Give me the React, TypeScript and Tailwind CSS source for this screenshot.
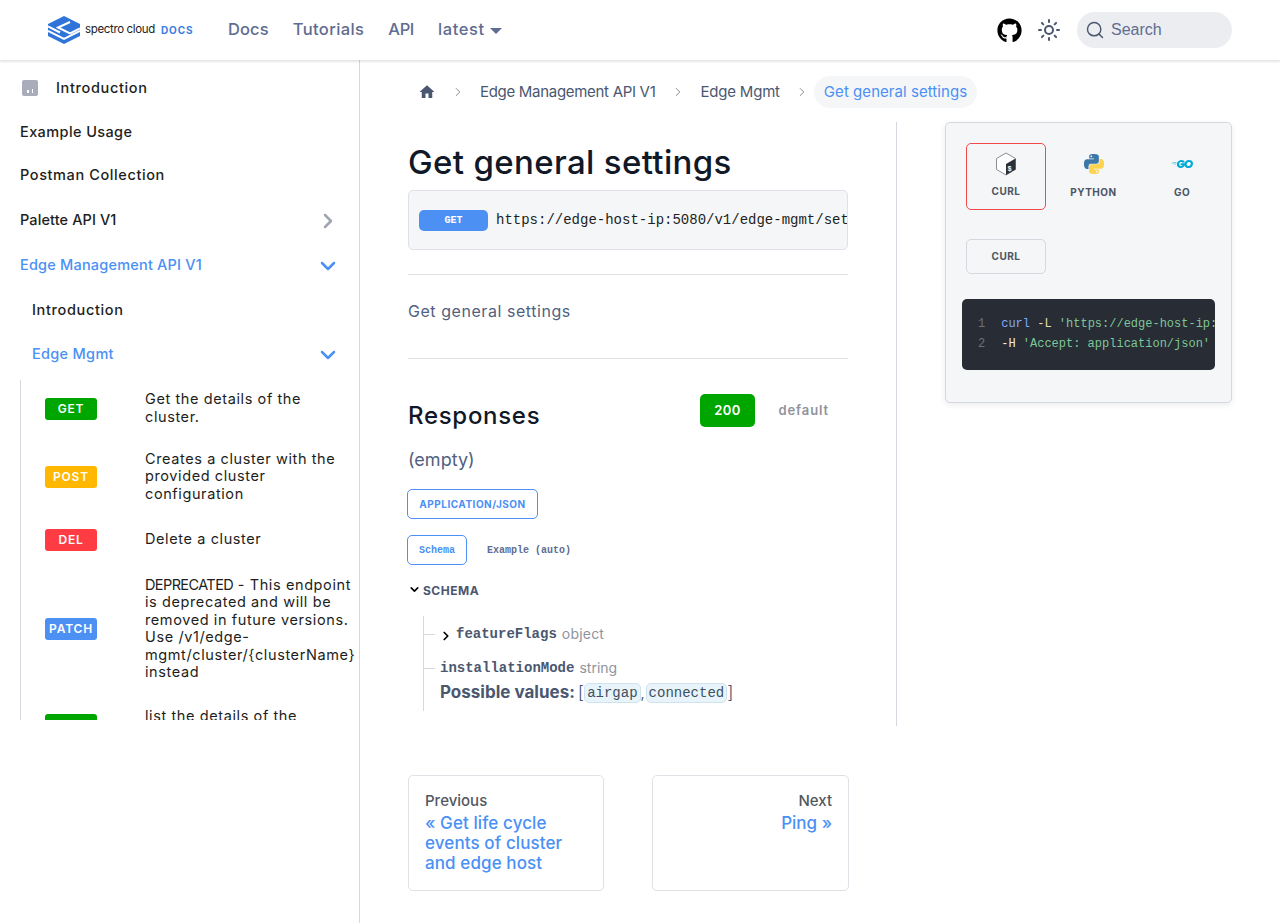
import type { ReactNode } from 'react'
import { ChevronDown, ChevronRight, Search, Sun } from 'lucide-react'
import { FaGithub } from 'react-icons/fa'
import { MdHome } from 'react-icons/md'
import { SiGo } from 'react-icons/si'

const endpoints: { method: string; color: string; lines: ReactNode[]; h: string }[] = [
  { method: 'GET', color: 'bg-[#00a600]', lines: ['Get the details of the', 'cluster.'], h: 'h-[57px]' },
  { method: 'POST', color: 'bg-[#ffb700]', lines: ['Creates a cluster with the', 'provided cluster', 'configuration'], h: 'h-[80px]' },
  { method: 'DEL', color: 'bg-[#ff3b44]', lines: ['Delete a cluster'], h: 'h-[46px]' },
  {
    method: 'PATCH',
    color: 'bg-[#4d90f4]',
    lines: [
      <><span className="tracking-[-0.6px]">DEPRECATED</span> - This endpoint</>,
      'is deprecated and will be',
      'removed in future versions.',
      'Use /v1/edge-',
      'mgmt/cluster/{clusterName}',
      'instead',
    ],
    h: 'h-[132px]',
  },
  { method: 'GET', color: 'bg-[#00a600]', lines: ['list the details of the', 'cluster'], h: 'h-[60px]' },
]

function Logo() {
  return (
    <svg width="32" height="28" viewBox="0 0 32 28" className="shrink-0">
      <path d="M16 0 32 8v12L16 28 0 20V8z" fill="#2f74d9" />
      <path d="M0 15 16 23 32 15" fill="none" stroke="#fff" strokeWidth="2" />
      <path d="M0 10.500 12 16.500M22 6 10 11.500 22 17.500 32 12.500" fill="none" stroke="#fff" strokeWidth="2" />
    </svg>
  )
}

function BashIcon() {
  return (
    <svg width="22" height="24" viewBox="0 0 22 24">
      <path d="M11 1 20.500 6.500v11L11 23 1.500 17.500v-11z" fill="#fff" stroke="#8a8f98" strokeWidth="1" />
      <path d="M20.500 6.500v11L11 23V12z" fill="#2b3038" />
      <text x="12.500" y="19" fontSize="7" fill="#fff" fontFamily="Liberation Mono, monospace">$_</text>
    </svg>
  )
}

function PythonIcon() {
  return (
    <svg width="20" height="22" viewBox="0 0 24 24">
      <path fill="#3b78a8" d="M14.250.18l.9.2.73.26.59.3.45.32.34.34.25.34.16.33.1.3.04.26.02.2-.01.13V8.500l-.05.63-.13.55-.21.46-.26.38-.3.31-.33.25-.35.19-.35.14-.33.1-.3.07-.26.04-.21.02H8.770l-.69.05-.59.14-.5.22-.41.27-.33.32-.27.35-.2.36-.15.37-.1.35-.07.32-.04.27-.02.21v3.060H3.170l-.21-.03-.28-.07-.32-.12-.35-.18-.36-.26-.36-.36-.35-.46-.32-.59-.28-.73-.21-.88-.14-1.050-.05-1.230.06-1.220.16-1.040.24-.87.32-.71.36-.57.4-.44.42-.33.42-.24.4-.16.36-.1.32-.05.24-.01h.16l.06.01h8.160v-.83H6.180l-.01-2.750-.02-.37.05-.34.11-.31.17-.28.25-.26.31-.23.38-.2.44-.18.51-.15.58-.12.64-.1.71-.06.77-.04.84-.02 1.270.05zm-6.300 1.980l-.23.33-.08.41.08.41.23.34.33.22.41.09.41-.09.33-.22.23-.34.08-.41-.08-.41-.23-.33-.33-.22-.41-.09-.41.09z" />
      <path fill="#fdd34f" d="M21.040 6.110l.28.06.32.12.35.18.36.27.36.35.35.47.32.59.28.73.21.88.14 1.040.05 1.230-.06 1.230-.16 1.040-.24.86-.32.71-.36.57-.4.45-.42.33-.42.24-.4.16-.36.09-.32.05-.24.02-.16-.01h-8.220v.82h5.840l.01 2.760.02.36-.05.34-.11.31-.17.29-.25.25-.31.24-.38.2-.44.17-.51.15-.58.13-.64.09-.71.07-.77.04-.84.01-1.270-.04-1.070-.14-.9-.2-.73-.25-.59-.3-.45-.33-.34-.34-.25-.34-.16-.33-.1-.3-.04-.25-.02-.2.01-.13v-5.340l.05-.64.13-.54.21-.46.26-.38.3-.32.33-.24.35-.2.35-.14.33-.1.3-.06.26-.04.21-.02.13-.01h5.840l.69-.05.59-.14.5-.21.41-.28.33-.32.27-.35.2-.36.15-.36.1-.35.07-.32.04-.28.02-.21V6.070h2.090l.14.01zm-6.470 14.250l-.23.33-.08.41.08.41.23.33.33.23.41.08.41-.08.33-.23.23-.33.08-.41-.08-.41-.23-.33-.33-.23-.41-.08-.41.08z" />
    </svg>
  )
}

function Header() {
  return (
    <header className="relative z-10 flex h-[60px] items-center justify-between bg-white pl-12 pr-12 shadow-[0_2px_2px_rgba(0,0,0,0.1)]">
      <div className="flex items-center">
        <div className="flex w-[180px] items-center">
          <Logo />
          <span className="ml-[5px] text-[11.500px] tracking-[-0.35px] text-[#222]">spectro cloud</span>
          <span className="ml-[6px] text-[10px] font-bold tracking-[0.9px] text-[#3b7de0]">DOCS</span>
        </div>
        <nav className="-mt-px flex items-center text-[16.500px] font-medium text-[#606c91]">
          <span className="tracking-[0.1px]">Docs</span>
          <span className="ml-6 tracking-[0.4px]">Tutorials</span>
          <span className="ml-6 tracking-[-0.4px]">API</span>
          <span className="ml-[24px] flex items-center gap-[5px] tracking-[0.6px]">
            latest
            <span className="mt-[3px] h-0 w-0 border-x-[6px] border-t-[6px] border-x-transparent border-t-[#606c91]" />
          </span>
        </nav>
      </div>
      <div className="flex items-center">
        <FaGithub className="text-[25px] text-black" />
        <Sun className="ml-[15px] h-6 w-6 text-[#4b5770]" strokeWidth={2} />
        <div className="ml-[16px] flex h-9 w-[155px] items-center gap-[6px] rounded-full bg-[#ebedf0] pl-2 font-['Liberation_Sans',sans-serif] text-base text-[#606c91]">
          <Search className="h-5 w-5 text-[#4b5770]" strokeWidth={1.750} />
          Search
        </div>
      </div>
    </header>
  )
}

function Sidebar() {
  return (
    <aside className="w-[360px] shrink-0 border-r border-[#d5d8de] pt-[6px] text-[14.500px] font-medium text-[#1c1e21]">
      <div className="flex h-11 items-center pl-[22px]">
        <span className="flex h-4 w-4 items-end justify-center gap-[3px] rounded-[2px] bg-[#a9adbb] pb-[3px]">
          <span className="h-[3px] w-[1.500px] bg-white" />
          <span className="h-[4px] w-[1.500px] bg-white" />
        </span>
        <span className="ml-[18px] tracking-[0.65px]">Introduction</span>
      </div>
      <div className="flex h-11 items-center pl-5 tracking-[0.4px]">Example Usage</div>
      <div className="flex h-[42px] items-center pl-5 tracking-[0.6px]">Postman Collection</div>
      <div className="flex h-12 items-center justify-between pl-5 pr-[19px] tracking-[0.1px]">
        Palette API V1
        <ChevronRight className="h-6 w-6 translate-y-px text-[#a0a3b1]" strokeWidth={2.500} />
      </div>
      <div className="flex h-[42px] items-center justify-between pl-5 pr-[19px] tracking-[0.2px] text-[#4a90f5]">
        Edge Management API V1
        <ChevronDown className="h-6 w-6 translate-y-px" strokeWidth={2.500} />
      </div>
      <div className="flex h-[48px] items-center pl-8 tracking-[0.65px]">Introduction</div>
      <div className="flex h-[40px] items-center justify-between pl-8 pr-[19px] tracking-[0.3px] text-[#4a90f5]">
        Edge Mgmt
        <ChevronDown className="h-6 w-6 translate-y-px" strokeWidth={2.500} />
      </div>
      <div className="ml-5 mt-[6px] h-[340px] overflow-hidden border-l border-[#d5d8de]">
        {endpoints.map((e, i) => (
          <div key={i} className={`flex shrink-0 items-center ${e.h}`}>
            <span className={`ml-6 flex h-[22px] w-[52px] shrink-0 items-center justify-center rounded-[3px] text-xs font-semibold tracking-[0.8px] text-white ${e.color}`}>
              {e.method}
            </span>
            <span className="ml-12 -translate-y-px whitespace-nowrap text-[14.500px] font-normal leading-[17.500px] tracking-[0.6px]">
              {e.lines.map((l, j) => (
                <span key={j} className="block">{l}</span>
              ))}
            </span>
          </div>
        ))}
      </div>
    </aside>
  )
}

function Breadcrumbs() {
  return (
    <div className="flex h-8 items-center whitespace-nowrap pl-[58px] text-[15px] text-[#4b5770]">
      <MdHome className="text-[18px] text-[#4b5770]" />
      <ChevronRight className="ml-[15px] mr-[15px] h-[14px] w-[14px] text-[#777]" strokeWidth={1.500} />
      <span className="tracking-[-0.3px]">Edge Management API V1</span>
      <ChevronRight className="ml-[16px] mr-[15px] h-[14px] w-[14px] text-[#777]" strokeWidth={1.500} />
      <span className="tracking-[-0.2px]">Edge Mgmt</span>
      <ChevronRight className="ml-[15px] mr-[5px] h-[14px] w-[14px] text-[#777]" strokeWidth={1.500} />
      <span className="flex h-8 items-center rounded-full bg-[#f5f6f8] px-[10px] tracking-[0.05px] text-[#4a90f5]">Get general settings</span>
    </div>
  )
}

function Article() {
  return (
    <article className="w-[537px] shrink-0 border-r border-[#d5d8de] pl-12 pr-12">
      <h1 className="mt-[17px] h-[51px] text-[33px] font-medium leading-[46px] tracking-[0.35px] text-[#111827]">Get general settings</h1>
      <div className="flex h-[60px] items-center overflow-hidden whitespace-nowrap rounded-[5px] border border-[#dfe1e6] bg-[#f5f6f8] pl-[10px]">
        <span className="flex h-[21px] w-[69px] shrink-0 items-center justify-center rounded-[5px] bg-[#4d90f4] font-['Liberation_Mono',monospace] text-[10px] font-bold text-white">GET</span>
        <span className="ml-2 font-['Liberation_Mono',monospace] text-sm text-[#1c1e21]">https://edge-host-ip:5080/v1/edge-mgmt/settings</span>
      </div>
      <hr className="mt-6 border-[#dfe1e6]" />
      <p className="mt-[24px] h-6 text-base tracking-[0.55px] text-[#525f7f]">Get general settings</p>
      <hr className="mt-[35px] border-[#dfe1e6]" />

      <div className="mt-[35px] flex justify-between">
        <h2 className="mt-[6px] text-2xl font-medium leading-8 tracking-[0.7px] text-[#111827]">Responses</h2>
        <div className="flex h-[33px] items-center">
          <span className="flex h-[33px] w-[55px] items-center justify-center rounded-[5px] bg-[#00a600] text-[13px] font-semibold tracking-[0.4px] text-white">200</span>
          <span className="w-[93px] pr-[19px] text-right text-[13px] font-semibold tracking-[0.9px] text-[#90939c]">default</span>
        </div>
      </div>
      <p className="mt-[14px] text-lg leading-7 text-[#525f7f]">(empty)</p>
      <span className="-ml-px mt-[15px] flex h-[30px] w-[131px] items-center justify-center rounded-[5px] border border-[#4a90f5] text-[10px] font-bold tracking-[0.5px] text-[#4a90f5]">APPLICATION/JSON</span>
      <div className="-ml-px mt-4 flex h-[30px] items-center font-['Liberation_Mono',monospace] text-[10px] font-bold">
        <span className="flex h-[30px] w-[60px] items-center justify-center rounded-[5px] border border-[#4a90f5] text-[#4a90f5]">Schema</span>
        <span className="ml-5 text-[#606c91]">Example (auto)</span>
      </div>
      <div className="mt-4 flex h-5 items-center">
        <ChevronDown className="h-[13px] w-[13px] -translate-y-[2px] text-black" strokeWidth={3} />
        <span className="ml-[2px] text-xs font-bold tracking-[0.5px] text-[#4b5770]">SCHEMA</span>
      </div>
      <div className="ml-[15px] mt-[15px] h-[95px] border-l border-[#d5d8de] pt-2">
        <div className="flex h-[20px] items-center">
          <span className="h-px w-[11px] bg-[#d5d8de]" />
          <ChevronRight className="ml-[4px] h-[14px] w-[14px] translate-y-[2px] text-black" strokeWidth={3} />
          <span className="ml-[3px] font-['Liberation_Mono',monospace] text-sm font-bold text-[#4b5770]">featureFlags</span>
          <span className="ml-[5px] text-sm tracking-[0.2px] text-[#90939c]">object</span>
        </div>
        <div className="mt-[14px] flex h-[20px] items-center">
          <span className="h-px w-[11px] bg-[#d5d8de]" />
          <span className="ml-[5px] font-['Liberation_Mono',monospace] text-sm font-bold text-[#4b5770]">installationMode</span>
          <span className="ml-[5px] text-sm text-[#90939c]">string</span>
        </div>
        <div className="ml-4 mt-[5px] flex h-[20px] items-center whitespace-nowrap text-[#4b5770]">
          <span className="text-[17px] font-bold">Possible values:</span>
          <span className="ml-[3px] text-lg font-light">[</span>
          <code className="rounded-[5px] border border-[#cfe3ee] bg-[#e8f4fa] px-[2px] font-['Liberation_Mono',monospace] text-sm leading-[18px] text-[#3f5060]">airgap</code>
          <span className="text-sm">,</span>
          <code className="ml-[1px] rounded-[5px] border border-[#cfe3ee] bg-[#e8f4fa] px-[2px] font-['Liberation_Mono',monospace] text-sm leading-[18px] text-[#3f5060]">connected</code>
          <span className="text-lg font-light">]</span>
        </div>
      </div>
      <div className="h-[15px]" />
    </article>
  )
}

function CodePanel() {
  return (
    <div className="ml-12 h-[281px] w-[287px] rounded-[5px] border border-[#d5d8de] bg-[#f5f6f8] shadow-[0_2px_6px_rgba(0,0,0,0.08)]">
      <div className="ml-5 mt-5 flex text-[10px] font-bold tracking-[0.5px] text-[#4b5563]">
        <div className="flex h-[67px] w-20 flex-col items-center justify-between rounded-[5px] border border-[#f04a4f] pb-[10px] pt-2">
          <BashIcon />
          CURL
        </div>
        <div className="flex h-[67px] w-[95px] flex-col items-center justify-between pb-[10px] pt-[10px]">
          <PythonIcon />
          PYTHON
        </div>
        <div className="flex h-[67px] w-[82px] flex-col items-center justify-between pb-[10px] pt-[10px]">
          <SiGo className="h-[22px] w-7 text-[#00acd7]" />
          GO
        </div>
      </div>
      <div className="ml-5 mt-[29px] flex h-[35px] w-20 items-center justify-center rounded-[5px] border border-[#d5d8de] text-[10px] font-bold tracking-[0.5px] text-[#4b5563]">CURL</div>
      <div className="ml-4 mt-[25px] h-[71px] w-[253px] overflow-hidden whitespace-nowrap rounded-[5px] bg-[#282c34] pl-4 pt-[15px] font-['Liberation_Mono',monospace] text-xs leading-5">
        <div>
          <span className="text-[#6b717d]">1</span>
          <span className="ml-4 text-[#82aaff]">curl</span>
          <span className="text-[#e5dcb0]"> -L </span>
          <span className="text-[#7ec699]">'https://edge-host-ip:5080/v1/edge-mgmt/settings'</span>
        </div>
        <div>
          <span className="text-[#6b717d]">2</span>
          <span className="ml-4 text-[#e8eaf0]">-H </span>
          <span className="text-[#7ec699]">'Accept: application/json'</span>
        </div>
      </div>
    </div>
  )
}

function Pagination() {
  return (
    <div className="ml-12 mt-[49px] flex pb-8">
      <div className="h-[116px] w-[196px] rounded-[5px] border border-[#dfe1e6] px-4 pt-[15px]">
        <div className="text-[15px] font-medium leading-5 text-[#525860]">Previous</div>
        <div className="mt-[2px] text-[17px] font-medium leading-5 tracking-[0.1px] text-[#4a90f5]">« Get life cycle events of cluster and edge host</div>
      </div>
      <div className="ml-12 h-[116px] w-[197px] rounded-[5px] border border-[#dfe1e6] px-4 pt-[15px] text-right">
        <div className="text-[15px] font-medium leading-5 text-[#525860]">Next</div>
        <div className="mt-[2px] text-[17px] font-medium leading-5 text-[#4a90f5]">Ping »</div>
      </div>
    </div>
  )
}

export default function App() {
  return (
    <div className="flex h-[923px] flex-col overflow-hidden bg-white font-['Inter',sans-serif]">
      <Header />
      <div className="flex flex-1">
        <Sidebar />
        <main className="min-w-0 flex-1 pt-4">
          <Breadcrumbs />
          <div className="mt-[14px] flex">
            <Article />
            <CodePanel />
          </div>
          <Pagination />
        </main>
      </div>
    </div>
  )
}
